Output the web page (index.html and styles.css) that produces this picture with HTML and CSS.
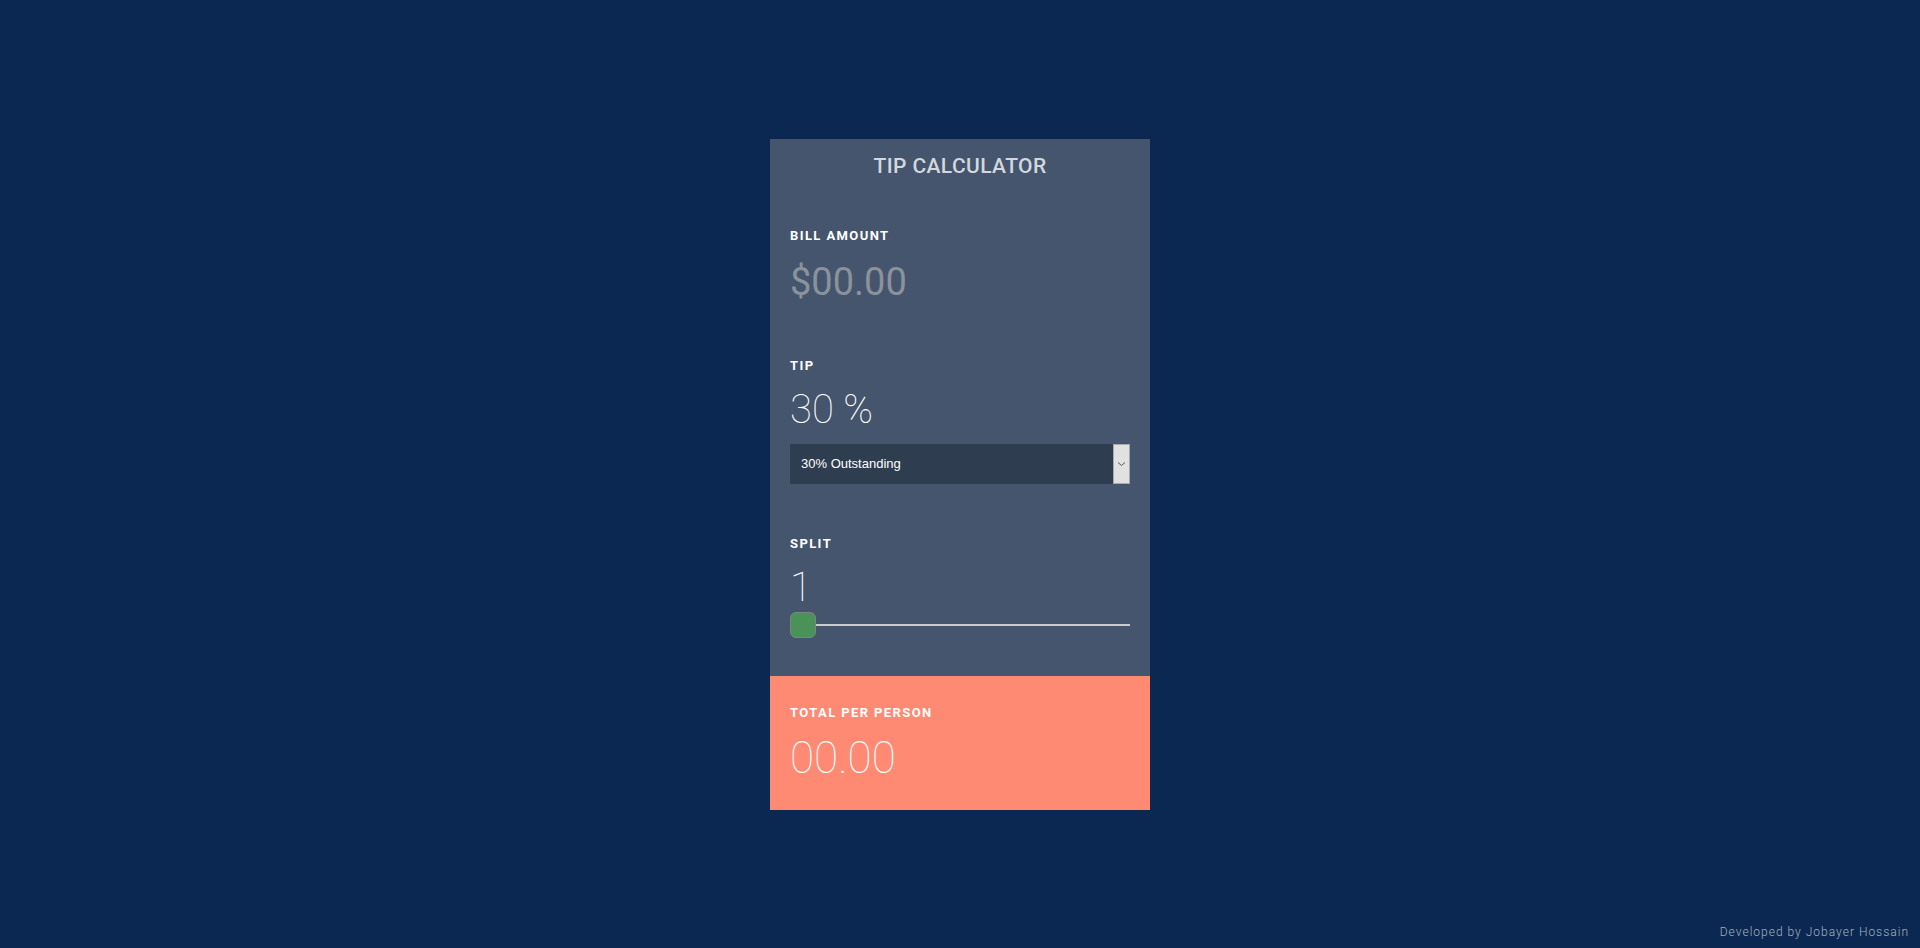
FILE: index.html
```html
<!DOCTYPE html>
<html lang="en">
<head>
<meta charset="utf-8">
<title>Tip Calculator</title>
<link rel="stylesheet" href="styles.css">
</head>
<body>
<main class="page">
  <section class="card">
    <h1 class="title">TIP CALCULATOR</h1>
    <div class="inputs">
      <div class="field">
        <div class="label">BILL AMOUNT</div>
        <div class="bill">$00.00</div>
      </div>
      <div class="field">
        <div class="label">TIP</div>
        <div class="big">30 %</div>
        <div class="select">
          <span class="select-text">30% Outstanding</span>
          <span class="select-btn">
            <svg width="9" height="6" viewBox="0 0 9 6"><path d="M1 1.5 L4.5 4.5 L8 1.5" fill="none" stroke="#555" stroke-width="1"/></svg>
          </span>
        </div>
      </div>
      <div class="field">
        <div class="label">SPLIT</div>
        <div class="big">1</div>
        <div class="slider">
          <span class="thumb"></span>
          <span class="track"></span>
        </div>
      </div>
    </div>
    <div class="total">
      <div class="label">TOTAL PER PERSON</div>
      <div class="total-value">00.00</div>
    </div>
  </section>
  <footer class="credit">Developed by Jobayer Hossain</footer>
</main>
</body>
</html>
```
FILE: styles.css
```css
* { box-sizing: border-box; }
html, body { margin: 0; padding: 0; }
body {
  background: #0b2852;
  font-family: Roboto, "Noto Sans", "Liberation Sans", sans-serif;
  color: #fff;
}
.page {
  min-height: 100vh;
  display: flex;
  align-items: center;
  justify-content: center;
  position: relative;
}
.card {
  width: 380px;
  height: 671px;
  background: #44556d;
  display: flex;
  flex-direction: column;
}
.title {
  margin: 0;
  padding-top: 15px;
  font-size: 21px;
  line-height: 24px;
  font-weight: 500;
  letter-spacing: 0.4px;
  text-align: center;
  color: #d3d7de;
}
.inputs {
  flex: 1;
  padding: 50px 20px 0;
  display: flex;
  flex-direction: column;
  gap: 52px;
}
.field { display: flex; flex-direction: column; }
.label {
  font-size: 13px;
  line-height: 16px;
  font-weight: 700;
  letter-spacing: 1.4px;
  color: #fff;
}
.bill {
  margin-top: 14px;
  font-size: 38px;
  line-height: 48px;
  font-weight: 400;
  color: #8a929c;
}
.big {
  margin-top: 12px;
  font-size: 40px;
  line-height: 48px;
  font-weight: 100;
  color: #fff;
}
.select {
  margin-top: 10px;
  height: 40px;
  display: flex;
  background: #2e3d50;
}
.select-text {
  flex: 1;
  padding-left: 11px;
  font-family: "Liberation Sans", Arial, sans-serif;
  font-size: 13px;
  line-height: 40px;
  color: #fff;
}
.select-btn {
  width: 17px;
  background: #e1e1e1;
  border: 1px solid #a9a9a9;
  display: flex;
  align-items: center;
  justify-content: center;
}
.slider {
  display: flex;
  align-items: center;
  height: 26px;
}
.thumb {
  width: 26px;
  height: 26px;
  border-radius: 6px;
  background: #4a9358;
  border: 1px solid #788880;
}
.track {
  flex: 1;
  height: 2px;
  background: #c9cdd4;
}
.total {
  height: 134px;
  background: #ff8a73;
  padding: 29px 20px 0;
}
.total-value {
  margin-top: 10px;
  font-size: 44px;
  line-height: 54px;
  font-weight: 100;
  color: #fff;
}
.credit {
  position: absolute;
  right: 11px;
  bottom: 9px;
  font-size: 12px;
  font-weight: 300;
  letter-spacing: 1px;
  color: #a7b0bd;
}
```
